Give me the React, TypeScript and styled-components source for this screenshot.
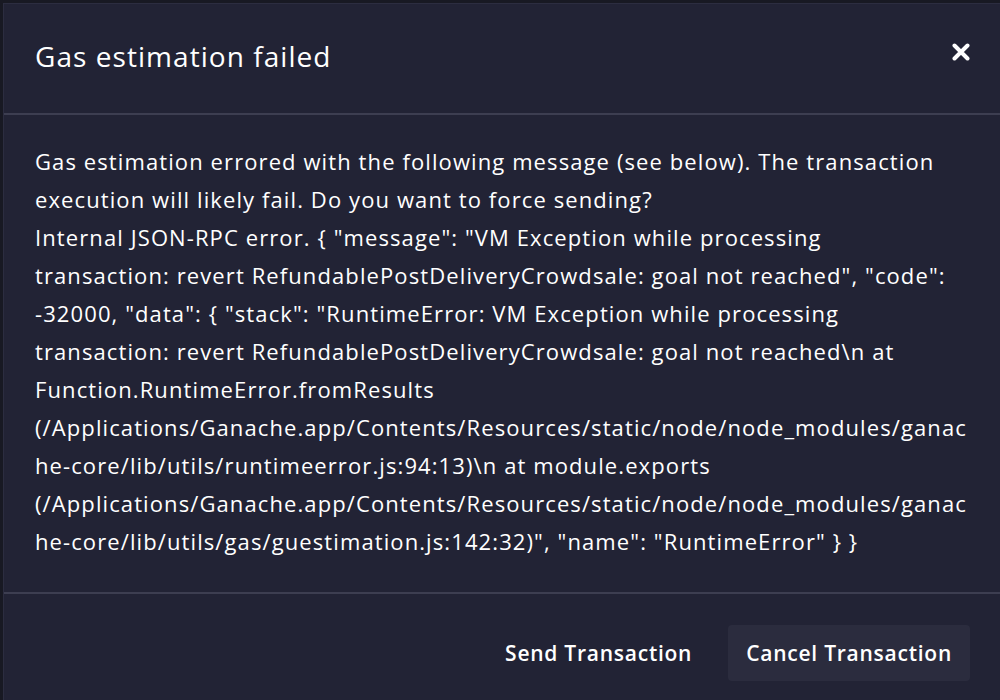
import React from "react";
import styled, { createGlobalStyle } from "styled-components";

const Global = createGlobalStyle`
  html, body { margin: 0; padding: 0; background: #181923; height: 100%; overflow: hidden; }
  #root { height: 100%; }
  * { box-sizing: border-box; }
`;

const Backdrop = styled.div`
  height: 700px;
  padding: 3px 0 0 3px;
  background: #181923;
  font-family: "Open Sans", "Noto Sans", sans-serif;
`;

const Modal = styled.div`
  height: 697px;
  display: flex;
  flex-direction: column;
  background: #222335;
  border-top: 1px solid #2c2d40;
  border-left: 1px solid #2c2d40;
  color: #ffffff;
`;

const Header = styled.div`
  height: 111px;
  display: flex;
  align-items: center;
  justify-content: space-between;
  padding: 0 28px 0 31px;
  border-bottom: 2px solid #3d3e51;
`;

const Title = styled.h2`
  margin: 0;
  font-size: 28px;
  font-weight: 400;
  letter-spacing: 1.05px;
  padding-bottom: 6px;
`;

const Close = styled.button`
  background: none;
  border: none;
  padding: 0;
  width: 22px;
  height: 22px;
  display: flex;
  align-items: center;
  justify-content: center;
  margin-bottom: 14px;
  cursor: pointer;
`;

const Body = styled.div`
  flex: 0 0 auto;
  height: 479px;
  padding: 27px 31px 0 31px;
  border-bottom: 2px solid #3d3e51;
`;

const Line = styled.div`
  font-size: 22px;
  line-height: 38px;
  letter-spacing: 1.1px;
  white-space: nowrap;
`;

const Footer = styled.div`
  flex: 1;
  display: flex;
  align-items: center;
  justify-content: flex-end;
  gap: 18px;
  padding: 12px 30px 0 0;
`;

const Button = styled.button<{ $filled?: boolean }>`
  height: 56px;
  padding: 0 18px;
  border: none;
  border-radius: 4px;
  background: ${(p) => (p.$filled ? "#2b2c3e" : "transparent")};
  color: #ffffff;
  font-family: "Open Sans", "Noto Sans", sans-serif;
  font-size: 21px;
  font-weight: 600;
  letter-spacing: 0.75px;
  cursor: pointer;
`;

const lines = [
  "Gas estimation errored with the following message (see below). The transaction",
  "execution will likely fail. Do you want to force sending?",
  'Internal JSON-RPC error. { "message": "VM Exception while processing',
  'transaction: revert RefundablePostDeliveryCrowdsale: goal not reached", "code":',
  '-32000, "data": { "stack": "RuntimeError: VM Exception while processing',
  "transaction: revert RefundablePostDeliveryCrowdsale: goal not reached\\n at",
  "Function.RuntimeError.fromResults",
  "(/Applications/Ganache.app/Contents/Resources/static/node/node_modules/ganac",
  "he-core/lib/utils/runtimeerror.js:94:13)\\n at module.exports",
  "(/Applications/Ganache.app/Contents/Resources/static/node/node_modules/ganac",
  'he-core/lib/utils/gas/guestimation.js:142:32)", "name": "RuntimeError" } }',
];

export default function App() {
  return (
    <>
      <Global />
      <Backdrop>
        <Modal>
          <Header>
            <Title>Gas estimation failed</Title>
            <Close aria-label="Close">
              <svg width="18" height="18" viewBox="0 0 18 18">
                <path d="M2.5 2.5 L15.5 15.5 M15.5 2.5 L2.5 15.5" stroke="#fff" strokeWidth="4" strokeLinecap="round" />
              </svg>
            </Close>
          </Header>
          <Body>
            {lines.map((l, i) => (
              <Line key={i}>{l}</Line>
            ))}
          </Body>
          <Footer>
            <Button>Send Transaction</Button>
            <Button $filled>Cancel Transaction</Button>
          </Footer>
        </Modal>
      </Backdrop>
    </>
  );
}
